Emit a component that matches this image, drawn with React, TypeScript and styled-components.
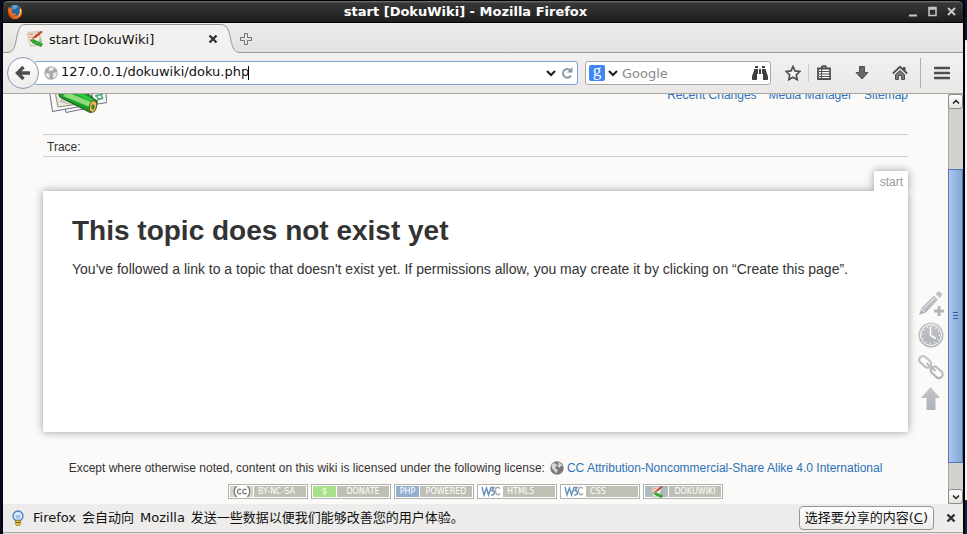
import React from "react";
import styled, { createGlobalStyle } from "styled-components";
import { FaBinoculars } from "react-icons/fa";

const ui = '"DejaVu Sans", "Noto Sans CJK SC", sans-serif';
const web = '"Liberation Sans", Arial, sans-serif';

const GlobalStyle = createGlobalStyle`
  * { box-sizing: border-box; }
  html, body, #root { height: 100%; }
  body { margin: 0; font-family: ${ui}; font-size: 13px; overflow: hidden; }
  button { padding: 0; border: 0; background: none; font: inherit; color: inherit; }
  svg { display: block; flex: none; }
`;

const Desktop = styled.div`
  height: 100vh;
  padding: 0 2px;
  background: linear-gradient(#0c1433 40px, #bbb 40px, #f4f4f4 41px, #f4f4f4 500px, #14204e 500px) right / 2px 100% no-repeat, #060a1c;
`;

const Window = styled.div`
  display: flex;
  flex-direction: column;
  height: 100%;
  border-left: 1px solid #000;
  border-right: 2px solid #000;
  border-radius: 6px 6px 0 0;
  background: #000;
`;

const TitleBar = styled.header`
  display: flex;
  align-items: center;
  flex: none;
  height: 23px;
  padding: 0 6px 0 4px;
  border-top: 1px solid #000;
  border-bottom: 1px solid #000;
  border-radius: 5px 5px 0 0;
  background: linear-gradient(#5d5d5d 1px, #383838 2px, #2c2c2c 50%, #1e1e1e);
  box-shadow: inset 0 1px #666;
  color: #fff;
`;

const WindowTitle = styled.h1`
  flex: 1;
  margin: 0;
  font-size: 13px;
  line-height: 20px;
  text-align: center;
`;

const WindowControls = styled.div`
  display: flex;
  gap: 8px;
`;

const TabStrip = styled.div`
  display: flex;
  flex: none;
  height: 30px;
  background: linear-gradient(#edeceb, #e2e1df);
  box-shadow: inset 0 -1px #999794;
`;

const TabBody = styled.div`
  display: flex;
  align-items: center;
  width: 196px;
  height: 29px;
  margin-top: 1px;
  padding-left: 2px;
  border-top: 1px solid #999794;
  background: #f2f1f0;
`;

const TabLabel = styled.span`
  flex: 1;
  padding-left: 6px;
  color: #111;
  white-space: nowrap;
`;

const IconButton = styled.button<{ $w?: number }>`
  display: flex;
  align-items: center;
  justify-content: center;
  flex: none;
  width: ${(p) => p.$w ?? 16}px;
  height: 24px;
`;

const NewTabButton = styled(IconButton)`
  margin-top: 4px;
`;

const Toolbar = styled.div`
  display: flex;
  align-items: center;
  flex: none;
  height: 41px;
  padding: 0 13px 0 4px;
  border-bottom: 1px solid #a9a6a2;
  background: linear-gradient(#f2f1f0, #e9e8e6);
`;

const BackButton = styled.button`
  display: flex;
  align-items: center;
  justify-content: center;
  flex: none;
  z-index: 1;
  width: 32px;
  height: 32px;
  border: 1px solid #8d9bb0;
  border-radius: 50%;
  background: linear-gradient(#fefefe, #ececec);
`;

const Field = styled.div<{ $focused?: boolean }>`
  display: flex;
  align-items: center;
  height: 24px;
  border: 1px solid ${(p) => (p.$focused ? "#7ba2d4" : "#aaa7a3")};
  border-radius: 3px;
  background: #fff;
`;

const AddressField = styled(Field)`
  flex: 1;
  min-width: 0;
  margin-left: -5px;
  padding: 0 2px 0 9px;
`;

const SearchField = styled(Field)`
  flex: none;
  width: 186px;
  margin: 0 7px;
  padding: 0 2px 0 3px;
`;

const TextInput = styled.input`
  min-width: 0;
  padding: 0 0 3px;
  border: 0;
  outline: 0;
  background: none;
  font: 13px ${ui};
  color: #111;
  &::placeholder { color: #8b8b8b; opacity: 1; }
`;

const AddressInput = styled(TextInput)`
  margin-left: 3px;
  field-sizing: content;
`;

const SearchInput = styled(TextInput)`
  flex: 1;
  padding: 0;
  margin-left: 1px;
`;

const Caret = styled.span`
  width: 1px;
  height: 14px;
  margin-left: -1px;
  background: #000;
`;

const Spacer = styled.span`
  flex: 1;
`;

const Divider = styled.span<{ $tall?: boolean }>`
  width: 1px;
  height: ${(p) => (p.$tall ? 30 : 18)}px;
  background: ${(p) => (p.$tall ? "#a5b1c0" : "#c5ccd5")};
`;

const ToolGroup = styled.div`
  display: flex;
  align-items: center;
  gap: 14px;
  padding: 0 8px 0 3px;
`;

const MenuSlot = styled.div`
  padding-left: 13px;
`;

const GoogleMark = styled.span`
  display: flex;
  justify-content: center;
  width: 16px;
  height: 16px;
  border-radius: 2px;
  background: #4285f4;
  color: #fff;
  font: 17px/11px "Liberation Serif", serif;
`;

const Viewport = styled.div`
  display: flex;
  flex: 1;
  min-height: 0;
  background: #fbfaf9;
`;

const Page = styled.div`
  display: grid;
  grid-template-columns: 40px minmax(0, 1fr) 40px;
  flex: 1;
  min-width: 0;
  overflow: hidden;
  font: 14px/21px ${web};
  color: #333;
`;

const Content = styled.div`
  grid-column: 2;
`;

const SiteHeader = styled.div`
  display: flex;
  align-items: flex-end;
  justify-content: space-between;
  height: 64px;
  margin-top: -44px;
`;

const SiteNav = styled.nav`
  display: flex;
  gap: 12px;
  padding-bottom: 11px;
  font-size: 12px;
  line-height: 16px;
`;

const Link = styled.a`
  color: #2b73b7;
  text-decoration: none;
`;

const Trace = styled.div`
  height: 23px;
  margin-top: 20px;
  padding: 0 4px;
  border-top: 1px solid #ccc;
  border-bottom: 1px solid #ccc;
  font-size: 12px;
  line-height: 24px;
`;

const PageId = styled.div`
  position: relative;
  z-index: 1;
  width: fit-content;
  height: 20px;
  margin: 14px 0 0 auto;
  padding: 0 5px 0 6px;
  background: #fff;
  box-shadow: 0 0 8px #999;
  clip-path: inset(-10px -10px 0 -10px);
  color: #999;
  font-size: 12px;
  line-height: 22px;
`;

const Article = styled.main`
  min-height: 241px;
  padding: 24px 29px;
  border-radius: 0 0 2px 2px;
  background: #fff;
  box-shadow: 0 0 8px #999;
`;

const Heading = styled.h2`
  margin: 0 0 12px;
  font-size: 28px;
  line-height: 32px;
`;

const Paragraph = styled.p`
  margin: 0;
`;

const Footer = styled.footer`
  padding-top: 27px;
  font-size: 12px;
  line-height: 18px;
`;

const License = styled.div`
  display: flex;
  justify-content: center;
  gap: 5px;
  white-space: nowrap;
`;

const LicenseLink = styled(Link)`
  display: flex;
  align-items: center;
  gap: 3px;
`;

const Badges = styled.div`
  display: flex;
  justify-content: center;
  gap: 3px;
  margin-top: 7px;
`;

const Badge = styled.a`
  display: flex;
  width: 80px;
  height: 15px;
  padding: 1px;
  border: 1px solid #b1b2a9;
  background: #fff;
  color: #fff;
  font: 8px/11px "DejaVu Sans", sans-serif;
  text-decoration: none;
`;

const BadgeMark = styled.span<{ $bg: string }>`
  display: flex;
  align-items: center;
  justify-content: center;
  width: 23px;
  margin-right: 1px;
  background: ${(p) => p.$bg};
`;

const BadgeText = styled.span<{ $center?: boolean }>`
  flex: 1;
  padding-left: ${(p) => (p.$center ? 0 : 4)}px;
  background: #bfc0b5;
  text-align: ${(p) => (p.$center ? "center" : "left")};
`;

const PageTools = styled.nav`
  display: flex;
  flex-direction: column;
  gap: 4px;
  padding: 195px 0 0 9px;
`;

const PageTool = styled.a`
  display: block;
  width: 28px;
  height: 28px;
`;

const ScrollBar = styled.div`
  display: flex;
  flex-direction: column;
  width: 15px;
  background: #d3d1ce;
  box-shadow: inset 1px 0 #a9a6a2;
`;

const ScrollButton = styled.button`
  display: flex;
  align-items: center;
  justify-content: center;
  width: 15px;
  height: 15px;
  border: 1px solid #8f8c88;
  border-radius: 3px;
  background: linear-gradient(#fff, #e4e3e1);
`;

const Track = styled.div<{ $share: number }>`
  flex: ${(p) => p.$share} 0 0;
`;

const Thumb = styled(Track)`
  display: flex;
  flex-direction: column;
  align-items: center;
  justify-content: center;
  gap: 2px;
  border: 1px solid #4f77ab;
  background: linear-gradient(to right, #b0caee 1px, #a2c0e8 2px, #82a7d8);
`;

const Grip = styled.span`
  width: 5px;
  height: 1px;
  background: #3c628f;
`;

const Notification = styled.div`
  display: flex;
  align-items: center;
  flex: none;
  height: 29px;
  padding: 0 7px;
  border-bottom: 1px solid #aaa7a3;
  background: #edecea;
  color: #111;
`;

const Message = styled.div`
  display: flex;
  align-items: baseline;
  flex: 1;
  gap: 6px;
  padding-left: 7px;
  line-height: 18px;
  white-space: nowrap;
`;

const ShareButton = styled.button`
  height: 24px;
  margin-right: 12px;
  padding: 0 5px;
  border: 1px solid #989590;
  border-radius: 4px;
  background: linear-gradient(#fff, #ecebe9);
  line-height: 20px;
`;

const BottomEdge = styled.div`
  flex: none;
  height: 1px;
  background: #e6e5e3;
`;

const FirefoxIcon = () => (
  <svg width="16" height="16" viewBox="0 0 16 16">
    <circle cx="8" cy="8" r="7" fill="#e2661a" />
    <circle cx="8" cy="6.600" r="5.600" fill="#2465a8" />
    <path d="M5 2q3-2 6 0l-2 3H6z" fill="#55a6dc" />
    <path d="M1.400 3.200C2 4 3 3.600 4 4l2 1.500L4.600 7c0 2 2 3 4.200 2.400 1 .6-.6 2.300-2.300 2.200 3 1.400 6.500-.7 6.600-4.200L14.700 5c1 5-2 10-7 10S.4 9 1.400 3.200z" fill="#e8701c" />
    <path d="M13.500 4c1.600 3 .8 7.500-3 9 2.300-2.300 2.800-5 2-7z" fill="#ffd34d" />
    <path d="M1.600 8c.4 3 2.400 5 5 5.700" stroke="#b92d16" fill="none" />
  </svg>
);

const DokuIcon = ({ size = 16 }: { size?: number }) => (
  <svg width={size} height={size} viewBox="0 0 16 16">
    <path d="M1 1.500l11-1 3 13-11 2z" fill="#fbf8ed" stroke="#b9b39a" strokeWidth=".7" />
    <path d="M.5 3l11-1.500 2.500 11-11 2z" fill="#f6f2e0" stroke="#aaa" strokeWidth=".6" />
    <path d="M1.500 4l5-.7M2 6.500l4-.5M2.500 9l2-.5" stroke="#eb8b6b" strokeWidth="1.200" />
    <path d="M11.500 9.500l3-1M12 11l3-1" stroke="#5cb860" strokeWidth=".8" />
    <path d="M15.500 1L9 6.500 5.500 7.500 8 4.500 14 .2z" fill="#dc4127" stroke="#903018" strokeWidth=".5" />
    <path d="M3.500 9l3-.5 9 4.500-1.500 2.800L5 11.500z" fill="#33ad36" stroke="#196f22" strokeWidth=".5" />
  </svg>
);

const Logo = () => (
  <svg width="64" height="64" viewBox="0 0 64 64">
    <path d="M24 14l34-6 6 44.500L30 58z" fill="#f8f8f6" stroke="#5a6078" strokeWidth=".9" />
    <path d="M19 46l30-3 1 14-27 5.500z" fill="#f8f8f6" stroke="#5a6078" strokeWidth=".9" />
    <path d="M3 18l38-6 5 43L9.500 61.500z" fill="#f8f8f6" stroke="#5a6078" strokeWidth=".9" />
    <path d="M8 20l36-4 5 36-34 5z" fill="#eceae2" stroke="#8a7d66" strokeWidth=".9" />
    <path d="M52 46l8-2M54 50l6-2M53 45l3 5M57 43l3 6" stroke="#40a76a" strokeWidth="1.400" />
    <path d="M16 52l26 6 3-2-24-11z" fill="#9b998e" opacity=".45" />
    <path d="M14 40L34 36 54 51C55 54 52 61 47 62.500L17 47z" fill="#16a029" stroke="#174f1b" />
    <path d="M24 42l27 11-2 5-29-12z" fill="#8cda78" />
    <path d="M30 38l21 12-1 2-24-11z" fill="#2cc840" />
    <ellipse cx="50" cy="56.500" rx="3.500" ry="5.800" transform="rotate(15 50 56.500)" fill="#efbd54" stroke="#5c5523" />
    <ellipse cx="50" cy="57" rx="1.500" ry="2.400" fill="#24983a" stroke="#736522" strokeWidth=".5" />
  </svg>
);

const Globe = ({ dark }: { dark?: boolean }) => (
  <svg width="14" height="14" viewBox="0 0 14 14">
    <circle cx="7" cy="7" r="6.700" fill={dark ? "#777" : "#a9a9a9"} />
    <path
      d={dark ? "M1.500 4l2-2 3 1 .5 2-2 1 1 2 2 1-2 3.500-2-3-2-2zM8 1l3 1.500 1.500 3-2-.5-1 2-2-2 1-2z" : "M1 8l3-1 2 2-1 3-2-1zM5 2l4-1 1 2-2 2-3 0zM9 7l4-1-1 5-3 1z"}
      fill={dark ? "#d6d6d6" : "#e9e9e9"}
    />
  </svg>
);

const CloseMark = () => (
  <svg width="10" height="10" viewBox="0 0 10 10">
    <path d="M1.500 1.500l7 7M8.500 1.500l-7 7" stroke="#2e3436" strokeWidth="2.400" />
  </svg>
);

const Chevron = ({ up, small }: { up?: boolean; small?: boolean }) => (
  <svg width={small ? 8 : 10} height={small ? 6 : 8} viewBox="0 0 10 8">
    <path d={up ? "M1 6l4-4 4 4" : "M1 2l4 4 4-4"} fill="none" stroke="#1b1b1b" strokeWidth="2" />
  </svg>
);

const W3C = () => (
  <svg width="21" height="11" viewBox="0 0 21 11">
    <path d="M2 1l2 8L6.500 2l2 7L11 1.500h3l-2 3c3.500 0 3 5-.8 4.500" fill="none" stroke="#668eb9" strokeWidth="1.400" />
    <path d="M20 2.500c-3-3-5 0-4.500 3 .5 4 3 4 4.500 2" fill="none" stroke="#a6a8ad" strokeWidth="1.400" />
  </svg>
);

const Creative = () => (
  <svg width="20" height="11" viewBox="0 0 20 11">
    <ellipse cx="10" cy="5.500" rx="8" ry="6" fill="#fff" />
    <path
      d="M4.500 0C1.500 3 1.500 8 4.500 11M15.500 0c3 3 3 8 0 11M9.200 4C7 2 5.300 4 5.500 6c.3 2 2.500 2.500 3.700 1M14.500 4c-2.200-2-3.900 0-3.700 2 .3 2 2.500 2.500 3.700 1"
      fill="none"
      stroke="#777a75"
      strokeWidth="1.300"
    />
  </svg>
);

const badges = [
  { text: "BY-NC-SA", mark: <Creative />, bg: "#d3d4cb" },
  { text: "DONATE", mark: "$", bg: "#a9e18b", center: true },
  { text: "POWERED", mark: "PHP", bg: "#91aecf", center: true },
  { text: "HTML5", mark: <W3C />, bg: "#fff" },
  { text: "CSS", mark: <W3C />, bg: "#fff" },
  { text: "DOKUWIKI", mark: <DokuIcon size={12} />, bg: "#aebbc0", center: true },
];

const tools = [
  {
    name: "Create this page",
    art: (
      <>
        <g fill="url(#tool)">
          <path d="M2 26l2.500-7L17 6.500l4 4L9 23.500z" />
          <path d="M18.500 5l2-2c2-2 6 2 4 4L22.500 9z" />
          <path d="M20.500 17h3v3.500H27v3h-3.500V27h-3v-3.500H17v-3h3.500z" />
        </g>
        <path d="M6 20.500l11.500-11.500M4.500 20l3.500 3.500" stroke="#fbfaf9" fill="none" />
      </>
    ),
  },
  {
    name: "Old revisions",
    art: (
      <>
        <circle cx="14" cy="14" r="12.500" fill="url(#tool)" />
        <circle cx="14" cy="14" r="10.500" fill="none" stroke="#fbfaf9" />
        <circle cx="14" cy="14" r="8.500" fill="none" stroke="#fbfaf9" strokeWidth="1.500" strokeDasharray="1 3.450" />
        <path d="M13.500 6v8.500l5.500 3" fill="none" stroke="#fff" strokeWidth="1.500" />
      </>
    ),
  },
  {
    name: "Backlinks",
    art: (
      <g fill="none" stroke="url(#tool)" strokeWidth="2.200">
        <rect x="1.500" y="5" width="13.500" height="7.500" rx="3.700" transform="rotate(42 8.200 8.700)" />
        <rect x="13" y="15.500" width="13.500" height="7.500" rx="3.700" transform="rotate(42 19.700 19.200)" />
        <path d="M9.500 10l9 8" />
      </g>
    ),
  },
  { name: "Back to top", art: <path d="M13.500 2L23 13h-4.500v12h-9V13H4z" fill="url(#tool)" /> },
];

const windowButtons = [
  { name: "Minimize", d: "M1 9.500h8", weight: 2 },
  { name: "Maximize", d: "M2 1.500h7v8H2zM2 3h7", weight: 1.5 },
  { name: "Close", d: "M2 2l7 7M9 2l-7 7", weight: 2 },
];

export default function App() {
  return (
    <>
      <GlobalStyle />
      <Desktop>
        <Window>
          <TitleBar>
            <FirefoxIcon />
            <WindowTitle>start [DokuWiki] - Mozilla Firefox</WindowTitle>
            <WindowControls>
              {windowButtons.map((b) => (
                <button key={b.name} aria-label={b.name}>
                  <svg width="11" height="11" viewBox="0 0 11 11">
                    <path d={b.d} fill="none" stroke="#c8c8c8" strokeWidth={b.weight} />
                  </svg>
                </button>
              ))}
            </WindowControls>
          </TitleBar>
          <TabStrip>
            <svg width="22" height="30" viewBox="0 0 22 30">
              <path d="M0 29.500h4C12 29.500 12 22 14 13 16 5 17 1.500 22 1.500V30H0z" fill="#f2f1f0" />
              <path d="M0 29.500h4C12 29.500 12 22 14 13 16 5 17 1.500 22 1.500" fill="none" stroke="#999794" />
            </svg>
            <TabBody>
              <DokuIcon />
              <TabLabel>start [DokuWiki]</TabLabel>
              <IconButton aria-label="Close tab"><CloseMark /></IconButton>
            </TabBody>
            <svg width="19" height="30" viewBox="0 0 19 30">
              <path d="M0 1.500C5 1.500 7 5 9 13c2 9 3 16.500 10 16.500V30H0z" fill="#f2f1f0" />
              <path d="M0 1.500C5 1.500 7 5 9 13c2 9 3 16.500 10 16.500" fill="none" stroke="#999794" />
            </svg>
            <NewTabButton $w={12} aria-label="New tab">
              <svg width="12" height="12" viewBox="0 0 12 12">
                <path d="M4.500.5h3v4h4v3h-4v4h-3v-4h-4v-3h4z" fill="#e6e5e3" stroke="#737373" />
              </svg>
            </NewTabButton>
          </TabStrip>
          <Toolbar>
            <BackButton aria-label="Back">
              <svg width="16" height="16" viewBox="0 0 16 16">
                <path d="M8.500 2L2.500 8l6 6M3 8h12" fill="none" stroke="#4c4c4c" strokeWidth="3.400" />
              </svg>
            </BackButton>
            <AddressField $focused>
              <Globe />
              <AddressInput aria-label="Address" defaultValue="127.0.0.1/dokuwiki/doku.php" />
              <Caret />
              <Spacer />
              <IconButton aria-label="Show history"><Chevron /></IconButton>
              <IconButton aria-label="Reload">
                <svg width="12" height="12" viewBox="0 0 12 12">
                  <path d="M9.500 3.500A4.300 4.300 0 1 0 10 8.500" fill="none" stroke="#8a97a3" strokeWidth="2" />
                  <path d="M11.500 0v5.500H6z" fill="#8a97a3" />
                </svg>
              </IconButton>
            </AddressField>
            <SearchField>
              <GoogleMark>g</GoogleMark>
              <IconButton aria-label="Choose search engine"><Chevron /></IconButton>
              <SearchInput aria-label="Search" placeholder="Google" />
              <IconButton aria-label="Search"><FaBinoculars size={16} color="#3e3e3e" /></IconButton>
            </SearchField>
            <IconButton $w={30} aria-label="Bookmark">
              <svg width="16" height="16" viewBox="0 0 16 16">
                <path d="M8 1.500l2 4.400 4.800.6-3.500 3.300.9 4.800L8 12.200l-4.200 2.400.9-4.800L1.200 6.500 6 5.900z" fill="#f6f6f6" stroke="#505050" strokeWidth="1.700" />
              </svg>
            </IconButton>
            <Divider />
            <ToolGroup>
              <IconButton $w={24} aria-label="Bookmarks menu">
                <svg width="16" height="16" viewBox="0 0 16 16">
                  <path d="M2 3.500h12v10.500H2zM5.500 3l1-1.800h3l1 1.800" fill="#fff" stroke="#505050" strokeWidth="1.800" />
                  <path d="M3 6.500h10M3 9h10M3 11.500h10" stroke="#505050" />
                  <path d="M5.500 4v9" stroke="#505050" />
                </svg>
              </IconButton>
              <IconButton $w={24} aria-label="Downloads">
                <svg width="16" height="16" viewBox="0 0 16 16">
                  <path d="M5.500 1.500h5v6h3.500l-6 6.500-6-6.500h3.500z" fill="#666" stroke="#505050" />
                </svg>
              </IconButton>
              <IconButton $w={24} aria-label="Home">
                <svg width="16" height="16" viewBox="0 0 16 16">
                  <path d="M.8 8.500L8 1.800l7.200 6.700" fill="none" stroke="#505050" strokeWidth="1.800" />
                  <path d="M11 2h2.500v4L11 4z" fill="#505050" />
                  <path d="M3.500 9.500L8 5.500l4.500 4v5h-3v-4h-3v4h-3z" fill="#777" stroke="#505050" />
                </svg>
              </IconButton>
            </ToolGroup>
            <Divider $tall />
            <MenuSlot>
              <IconButton aria-label="Menu">
                <svg width="16" height="14" viewBox="0 0 16 14">
                  <path d="M1 2h14M1 7h14M1 12h14" stroke="#4e4e4e" strokeWidth="2.600" strokeLinecap="round" />
                </svg>
              </IconButton>
            </MenuSlot>
          </Toolbar>
          <Viewport>
            <Page>
              <Content>
                <SiteHeader>
                  <Logo />
                  <SiteNav>
                    <Link href="#recent">Recent Changes</Link>
                    <Link href="#media">Media Manager</Link>
                    <Link href="#index">Sitemap</Link>
                  </SiteNav>
                </SiteHeader>
                <Trace>Trace:</Trace>
                <PageId>start</PageId>
                <Article>
                  <Heading>This topic does not exist yet</Heading>
                  <Paragraph>
                    You've followed a link to a topic that doesn't exist yet. If permissions allow, you may create it by clicking on “Create this page”.
                  </Paragraph>
                </Article>
                <Footer>
                  <License>
                    Except where otherwise noted, content on this wiki is licensed under the following license:
                    <LicenseLink href="#license"><Globe dark />CC Attribution-Noncommercial-Share Alike 4.0 International</LicenseLink>
                  </License>
                  <Badges>
                    {badges.map((b) => (
                      <Badge key={b.text} href="#badge">
                        <BadgeMark $bg={b.bg}>{b.mark}</BadgeMark>
                        <BadgeText $center={b.center}>{b.text}</BadgeText>
                      </Badge>
                    ))}
                  </Badges>
                </Footer>
              </Content>
              <PageTools>
                {tools.map((t) => (
                  <PageTool key={t.name} href="#tool" aria-label={t.name}>
                    <svg width="28" height="28" viewBox="0 0 28 28">
                      <defs>
                        <linearGradient id="tool" gradientUnits="userSpaceOnUse" x1="0" y1="0" x2="0" y2="28">
                          <stop stopColor="#c6c7c9" />
                          <stop offset="1" stopColor="#abb0b8" />
                        </linearGradient>
                      </defs>
                      {t.art}
                    </svg>
                  </PageTool>
                ))}
              </PageTools>
            </Page>
            <ScrollBar>
              <ScrollButton aria-label="Scroll up"><Chevron up small /></ScrollButton>
              <Track $share={60} />
              <Thumb $share={294}><Grip /><Grip /><Grip /></Thumb>
              <Track $share={26} />
              <ScrollButton aria-label="Scroll down"><Chevron small /></ScrollButton>
            </ScrollBar>
          </Viewport>
          <Notification>
            <svg width="16" height="16" viewBox="0 0 16 16">
              <circle cx="8" cy="6" r="5" fill="#d9e9f9" stroke="#4c80bd" strokeWidth="1.300" />
              <path d="M5.500 5l1.500 2 1-2 1 2 1.500-2M7 7v4M9 7v4" fill="none" stroke="#6f9fd3" strokeWidth=".8" />
              <path d="M5.500 10.500h5V14L9.500 15.500h-3L5.500 14z" fill="#e6c63c" stroke="#8b7420" strokeWidth=".7" />
              <path d="M5.500 12.500h5" stroke="#6b5a20" />
            </svg>
            <Message>
              <span>Firefox</span>
              <span>会自动向</span>
              <span>Mozilla</span>
              <span>发送一些数据以便我们能够改善您的用户体验。</span>
            </Message>
            <ShareButton>选择要分享的内容(<u>C</u>)</ShareButton>
            <IconButton $w={10} aria-label="Dismiss"><CloseMark /></IconButton>
          </Notification>
          <BottomEdge />
        </Window>
      </Desktop>
    </>
  );
}
